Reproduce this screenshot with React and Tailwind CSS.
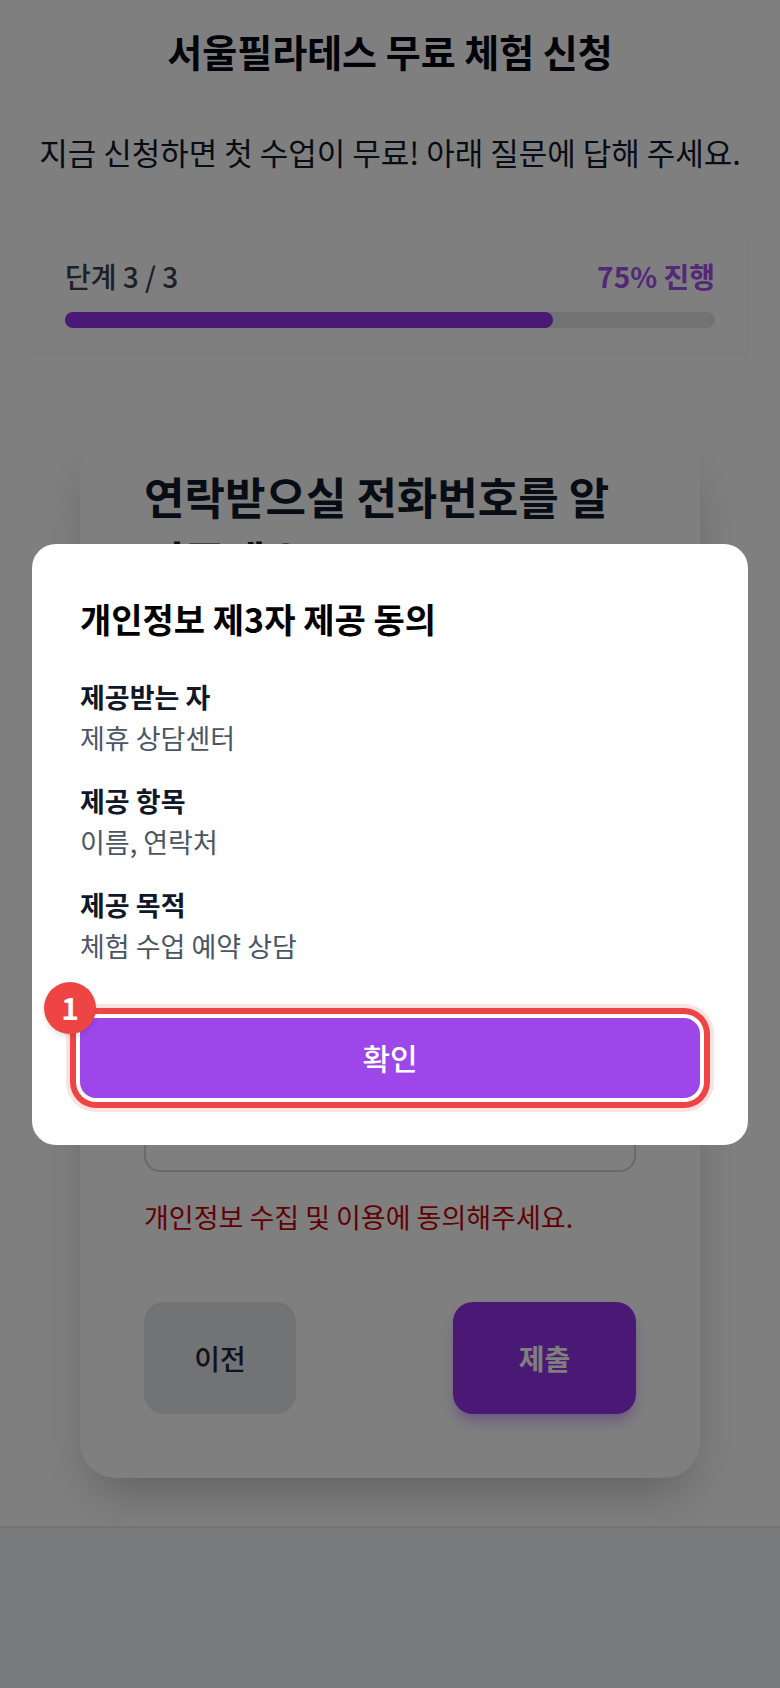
import { useState } from "react";

export default function App() {
  const [step] = useState(3);
  const progress = 75;

  const items = [
    { label: "제공받는 자", value: "제휴 상담센터" },
    { label: "제공 항목", value: "이름, 연락처" },
    { label: "제공 목적", value: "체험 수업 예약 상담" },
  ];

  return (
    <div className="min-h-[1688px] flex flex-col bg-white font-['Noto_Sans_CJK_KR','Noto_Sans',sans-serif]">
      <main className="pt-6 pb-12">
        <h1 className="text-center text-[38px] leading-[54px] font-bold text-gray-950">
          서울필라테스 무료 체험 신청
        </h1>
        <p className="mt-[54px] text-center text-[31px] leading-[40px] text-gray-900">
          지금 신청하면 첫 수업이 무료! 아래 질문에 답해 주세요.
        </p>

        {/* progress */}
        <div className="mx-8 mt-[61px] border border-gray-50 bg-white px-8 pt-6 pb-6 shadow-xs">
          <div className="flex items-center justify-between text-[28px] leading-[36px]">
            <span className="font-medium text-gray-700">단계 {step} / 3</span>
            <span className="font-semibold text-[#a650f0]">{progress}% 진행</span>
          </div>
          <div className="mt-[18px] h-4 rounded-full bg-[#e5e7eb]">
            <div className="h-4 rounded-full bg-[#9333ea]" style={{ width: `${progress}%` }} />
          </div>
        </div>

        {/* form card (behind dialog) */}
        <div className="mx-20 mt-[83px] rounded-[36px] bg-white px-16 pt-[28px] pb-16 shadow-2xl">
          <h2 className="text-[44px] leading-[64px] font-bold text-gray-900">
            연락받으실 전화번호를 알려주세요
          </h2>
          <div className="mt-10 h-[96px] rounded-2xl border-2 border-gray-300" />
          <div className="mt-10 h-[404px] rounded-2xl border-2 border-gray-300" />
          <p className="mt-[25px] text-[27px] leading-[40px] text-red-700">
            개인정보 수집 및 이용에 동의해주세요.
          </p>
          <div className="mt-[65px] flex justify-between">
            <button className="h-[112px] w-[152px] rounded-[20px] bg-[#e5e7eb] text-[28px] font-medium text-gray-800">
              이전
            </button>
            <button className="h-[112px] w-[183px] rounded-[20px] bg-[#9333ea] text-[28px] font-bold text-white shadow-lg shadow-purple-300">
              제출
            </button>
          </div>
        </div>
      </main>

      <footer className="flex-1 border-t-2 border-gray-200 bg-gray-100" />

      {/* dialog */}
      <div className="fixed inset-0 bg-black/50" />
      <div className="fixed inset-0 flex items-center justify-center px-8">
        <div className="w-full rounded-3xl bg-white px-12 pt-[50px] pb-[47px]">
          <h3 className="text-[34px] leading-[50px] font-bold text-black">개인정보 제3자 제공 동의</h3>
          <div className="mt-[32px] flex flex-col gap-[22px]">
            {items.map((it) => (
              <div key={it.label}>
                <div className="text-[27px] leading-[41px] font-semibold text-gray-900">{it.label}</div>
                <div className="text-[27px] leading-[41px] text-gray-600">{it.value}</div>
              </div>
            ))}
          </div>
          <div className="relative mt-[52px]">
            <button className="h-20 w-full rounded-2xl bg-[#9d46e9] text-[30px] font-medium text-white shadow-[0_0_0_4px_#ffffff,0_0_0_10px_#ef4444,0_0_0_14px_#fde2e2]">
              확인
            </button>
            <span className="absolute -left-9 -top-9 flex h-[52px] w-[52px] items-center justify-center rounded-full bg-[#ef4444] text-[30px] font-bold text-white shadow-md">
              1
            </span>
          </div>
        </div>
      </div>
    </div>
  );
}
